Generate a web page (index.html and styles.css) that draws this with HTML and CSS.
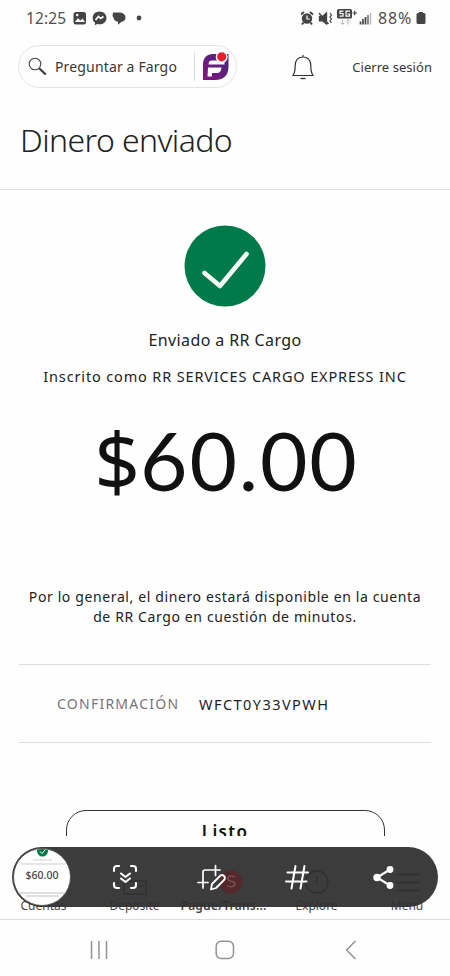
FILE: index.html
```html
<!DOCTYPE html>
<html lang="es">
<head>
<meta charset="utf-8">
<title>Dinero enviado</title>
<link rel="stylesheet" href="styles.css">
</head>
<body>
<div class="phone">
  <div class="status">
    <span class="time">12:25</span>
    <svg class="status-left" width="74" height="16" viewBox="0 0 74 16">
      <rect x="0.5" y="2" width="12.5" height="12.5" rx="2.5" fill="#444"/>
      <path d="M2 12l3-4 2.500 2.500 2-2 2.500 3.500z" fill="#fff"/><circle cx="4.200" cy="5" r="1.200" fill="#fff"/>
      <path d="M26.500 1.500c-4 0-6.800 2.800-6.800 6.400 0 2 .8 3.500 2.200 4.700v2.600l2.300-1.200c4.900 1.300 9.300-1.600 9.300-6.100 0-3.600-3-6.400-7-6.400z" fill="#444"/>
      <path d="M22.500 10l3-3.500 2.200 2 2.800-2" fill="none" stroke="#fff" stroke-width="1.600"/>
      <path d="M40 2.500h6c3.500 0 6.500 1.800 6.500 5 0 2.400-1.600 3.900-4 4.200l-3.500 3v-3c-2.500-.4-4.200-1.700-4.200-3.400L39.500 6z" fill="#444"/>
      <circle cx="66" cy="8" r="2.400" fill="#444"/>
    </svg>
    <svg class="status-right" width="71" height="20" viewBox="0 0 71 20">
      <circle cx="6" cy="10.500" r="5.200" fill="#444"/><path d="M0 6.500l3-2.500M12 6.500L9 4M2.500 14.500L1 16.500M9.500 14.500l1.500 2" stroke="#444" stroke-width="2"/><path d="M6 7.500v3.500h2.800" fill="none" stroke="#fff" stroke-width="1.200"/>
      <path d="M18.500 8.500h3l4-3.500v11l-4-3.200h-3zM18 5l9.500 11" fill="#444" stroke="#444" stroke-width="1.300"/><path d="M29 5l1.500 2-1.500 2 1.500 2-1.500 2 1.500 2" fill="none" stroke="#444" stroke-width="1.200"/>
      <rect x="36" y="1" width="15" height="9.500" rx="1.500" fill="#444"/>
      <path d="M42.500 3.200h-3.500v2.300h3v2.600h-3.500M49 3.200h-4v5H48.500V6h-2" fill="none" stroke="#fff" stroke-width="1.200"/>
      <path d="M51.500 5h4.500M53.700 2.800v4.500" stroke="#444" stroke-width="1.200"/>
      <path d="M41.500 11.500v5m-2-2l2 2 2-2M47 16.500v-5m-2 2l2-2 2 2" fill="none" stroke="#bbb"/>
      <path d="M59.500 16.500v-3M62 16.500v-5.500M64.500 16.500V9" stroke="#444" stroke-width="1.700"/><path d="M67 16.500v-9.500" stroke="#666" stroke-width="1.500"/><path d="M69.500 16.500v-11.500" stroke="#bbb" stroke-width="1.500"/>
    </svg>
    <span class="percent">88%</span>
    <svg width="10" height="14" viewBox="0 0 10 14"><path d="M3 1h4v1h1q1.500 0 1.500 1.500v8Q9.500 13 8 13H2Q.5 13 .5 11.500v-8Q.5 2 2 2h1z" fill="#444"/></svg>
  </div>
  <header class="topbar">
    <div class="search">
      <svg class="glass" width="20" height="20" viewBox="0 0 20 20"><circle cx="7" cy="7" r="5.800" fill="none" stroke="#444" stroke-width="1.100"/><path d="M11.300 11.500l6.500 6" stroke="#333" stroke-width="2"/></svg>
      <span class="search-text">Preguntar a Fargo</span>
      <span class="divider"></span>
      <svg class="fargo" width="28" height="30" viewBox="0 0 28 30">
        <defs><linearGradient id="g" x1="0" y1="1" x2="1" y2="0"><stop offset="0" stop-color="#86177d"/><stop offset="1" stop-color="#42257f"/></linearGradient></defs>
        <path d="M11 2H26.500v13c0 8-5 13-13 13H1V12C1 6 5 2 11 2z" fill="url(#g)"/>
        <path d="M10 8.500h12.500v4H6.500q0-4 3.500-4zM6 15.500h13.500q-.5 5.500-4.500 5.500h-5v3.500H5.500z" fill="#fff"/>
        <circle cx="19.700" cy="5" r="6" fill="#fff"/><circle cx="19.700" cy="4.800" r="4.600" fill="#e3202c"/>
      </svg>
    </div>
    <svg class="bell" width="22" height="26" viewBox="0 0 22 26"><path d="M11 1v2M1 21.500c2-3 2.200-6 2.200-10C3.200 6 6.500 3 11 3s7.800 3 7.800 8.500c0 4 .2 7 2.200 10z" fill="none" stroke="#333" stroke-width="1.200"/><path d="M8.500 24.500h5" stroke="#333" stroke-width="1.300"/></svg>
    <span class="signout">Cierre sesión</span>
  </header>
  <h1 class="title">Dinero enviado</h1>
  <main class="content">
    <svg class="check" width="82" height="82" viewBox="0 0 82 82"><circle cx="41" cy="41" r="40.500" fill="#007a49"/><path d="M20.500 48L36 61 62.500 29" fill="none" stroke="#f8fff8" stroke-width="4.600" stroke-linecap="round" stroke-linejoin="round"/></svg>
    <p class="sent">Enviado a RR Cargo</p>
    <p class="enrolled">Inscrito como RR SERVICES CARGO EXPRESS INC</p>
    <p class="amount"><span class="currency">$</span>60.00</p>
    <p class="note">Por lo general, el dinero estará disponible en la cuenta<br>de RR Cargo en cuestión de minutos.</p>
    <div class="confirm"><span class="label">CONFIRMACIÓN</span><span class="code">WFCT0Y33VPWH</span></div>
    <div class="clip"><div class="button">Listo</div></div>
  </main>
  <footer class="tabs">
    <span class="tab">Cuentas</span><span class="tab">Deposite</span><span class="tab active">Pague/Trans...</span><span class="tab">Explore</span><span class="tab">Menú</span>
    <div class="toolbar">
      <svg width="426" height="60" viewBox="0 0 426 60" fill="none">
        <g stroke="#303030" stroke-width="1.300"><path d="M112 34h22v13h-22zM122 39h9M384 27.500h24M384 35.500h24M384 43.500h24"/><circle cx="305" cy="35" r="11"/><path d="M305 29v7"/></g>
        <circle cx="219" cy="35" r="11.500" fill="#54292c"/><path d="M223 30c-3-2-7-1-7 1.500 0 4 7 2 7 5.500 0 3-5 3.500-8 1.500" stroke="#785053" stroke-width="1.500"/>
        <g stroke="#fff" stroke-width="2.100" stroke-linecap="round" stroke-linejoin="round">
          <path d="M102 24v-2q0-3 3-3h2M119 19h2q3 0 3 3v2M124 36v2q0 3-3 3h-2M107 41h-2q-3 0-3-3v-2M109 26.500l4.500 3.500 4.500-3.500M109 31.500l4.500 3.500 4.500-3.500"/>
          <path d="M191 41V25q0-2 2-2h15M203.500 18.500v10M186 35.500h10" stroke-width="1.700"/><path d="M199 42.500l1-5.500 8-8q2-2 4 0t0 4l-8 8z" stroke-width="1.800"/>
          <path d="M283.500 19l-4 22.500M292.500 19L288.500 41.500M275.500 25.500H296M274 34.500h20.500" stroke-width="2"/>
          <path d="M378 22.500L365 30.500l13 8"/>
        </g>
        <g fill="#fff"><circle cx="378" cy="22.500" r="3.400"/><circle cx="365" cy="30.500" r="3.700"/><circle cx="378" cy="38.500" r="3.400"/></g>
      </svg>
      <div class="thumb"><svg width="57" height="17" viewBox="0 0 57 17"><circle cx="28.500" cy="2" r="5.500" fill="#007a49"/><path d="M26 2.500l2 2 3.500-4" fill="none" stroke="#fff"/><path d="M19 11h19" stroke="#bbb" stroke-width=".7"/><path d="M7 15h44" stroke="#bbb" stroke-width=".7"/></svg><b>$60.00</b><svg width="57" height="8" viewBox="0 0 57 8"><path d="M5 2h47M12 5h33" stroke="#aaa" stroke-width=".7"/></svg></div>
    </div>
  </footer>
  <nav class="navbar">
    <svg width="18" height="20" viewBox="0 0 18 20"><path d="M1.500 1v18M9 1v18M16.500 1v18" stroke="#929292" stroke-width="1.500"/></svg>
    <svg width="20" height="20" viewBox="0 0 20 20"><rect x="1.200" y="1.200" width="17.300" height="17.300" rx="5" fill="none" stroke="#929292" stroke-width="1.500"/></svg>
    <svg width="12" height="20" viewBox="0 0 12 20"><path d="M10.500 1L1.500 10l9 9" fill="none" stroke="#929292" stroke-width="1.500"/></svg>
  </nav>
</div>
</body>
</html>
```

FILE: styles.css
```css
* { box-sizing: border-box; }
body { margin: 0; background: #fefefe; font-family: "Noto Sans", sans-serif; color: #222; }
p, h1 { margin: 0; font-weight: 400; }
svg { display: block; flex: none; }
.phone { width: 450px; height: 976px; overflow: hidden; display: flex; flex-direction: column; white-space: nowrap; }
.status { height: 36px; display: flex; align-items: center; padding: 0 24px 0 26px; color: #505050; font-size: 15.500px; }
.time { width: 47px; letter-spacing: .1px; }
.status-right { margin-left: auto; margin-right: 6px; }
.percent { width: 38px; font-size: 16px; letter-spacing: .8px; }
.topbar { height: 61px; display: flex; align-items: center; padding: 0 18px; }
.search { width: 219px; height: 43px; border: 1.500px solid #e3e3e3; border-radius: 22px; display: flex; align-items: center; padding-left: 9px; }
.search-text { width: 139px; margin-left: 7px; font-size: 14px; letter-spacing: .15px; color: #383838; }
.divider { width: 1px; height: 29px; background: #ddd; margin-right: 7px; }
.bell { margin-left: 55px; }
.signout { margin-left: auto; font-size: 13px; color: #383838; letter-spacing: .05px; }
.title { height: 93px; border-bottom: 1.500px solid #ddd; padding: 17px 0 0 20px; font-size: 32px; line-height: 52px; font-weight: 300; letter-spacing: -.6px; }
.content { height: 646px; display: flex; flex-direction: column; align-items: center; }
.check { margin-top: 35px; }
.sent { margin-top: 21px; font-size: 16px; line-height: 24px; letter-spacing: .4px; }
.enrolled { margin-top: 13px; font-size: 14.500px; line-height: 22px; letter-spacing: .85px; }
.amount { height: 104px; margin-top: 20px; margin-bottom: 3px; padding-left: 3px; font-family: Lato, "Noto Sans", sans-serif; font-size: 82px; line-height: 104px; letter-spacing: 1.800px; color: #111; }
.currency { font-family: "Noto Sans", sans-serif; font-size: 80px; line-height: 1; letter-spacing: 0; }
.note { margin-top: 73px; font-size: 14px; line-height: 20px; text-align: center; letter-spacing: .62px; }
.confirm { width: 412px; height: 79px; margin-top: 37px; border: solid #ddd; border-width: 1px 0; display: flex; align-items: center; padding-left: 38px; font-size: 14px; letter-spacing: 1.250px; }
.label { width: 142px; color: #777; }
.code { font-size: 14.500px; letter-spacing: 1.450px; }
.clip { width: 319px; height: 26px; margin-top: 67px; overflow: hidden; }
.button { height: 46px; border: 1.500px solid #333; border-radius: 20px; text-align: center; font-size: 17px; font-weight: 600; line-height: 42px; letter-spacing: 1.300px; color: #111; }
.tabs { position: relative; height: 84px; border-bottom: 1.500px solid #ddd; display: grid; grid-template-columns: 87px 95px 83px 103px 78px; align-items: end; padding-bottom: 4px; font-size: 12px; line-height: 18px; text-align: center; color: #444; }
.active { font-weight: 600; justify-self: center; letter-spacing: .2px; }
.toolbar { position: absolute; left: 12px; top: 11px; width: 426px; height: 60px; border-radius: 30px; background: rgba(48,48,48,.94); }
.thumb { position: absolute; left: 1px; top: 1px; width: 58px; height: 58px; border-radius: 50%; background: #fefefe; border: 1px solid #555; overflow: hidden; text-align: center; }
.thumb b { display: block; height: 25px; line-height: 18px; font-size: 10.500px; font-weight: 500; }
.navbar { flex: 1; display: flex; justify-content: space-between; padding: 20px 93px 0 90px; }
.navbar svg:nth-child(2) { margin-left: -4px; }
```
